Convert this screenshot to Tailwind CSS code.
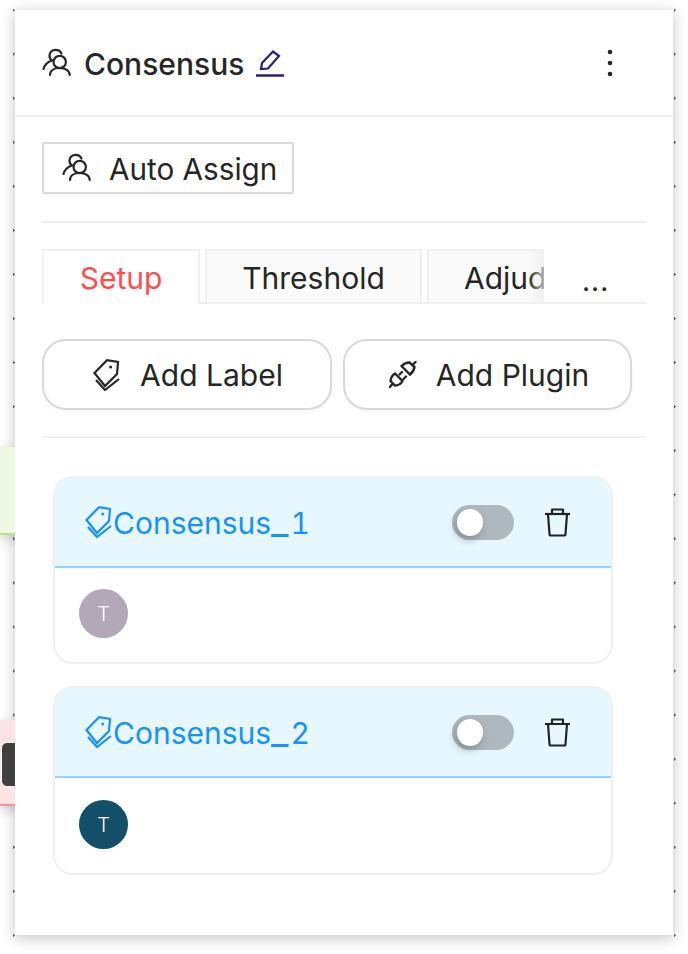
<!DOCTYPE html>
<html lang="en">
<head>
  <meta charset="UTF-8" />
  <title>Consensus</title>
  <script src="https://cdn.jsdelivr.net/npm/@tailwindcss/browser@4"></script>
</head>
<body class="relative w-[688px] h-[954px] overflow-hidden bg-white font-['Inter',sans-serif] text-[#262626]">

  <!-- dotted canvas, only the two columns beside the panel show -->
  <div class="absolute left-[12px] top-[9px] w-[3px] h-[928px] bg-[radial-gradient(circle,#666_1px,transparent_1px)] bg-[size:3px_44.07px] bg-[position:0_-21px]"></div>
  <div class="absolute left-[673px] top-[9px] w-[3px] h-[928px] bg-[radial-gradient(circle,#666_1px,transparent_1px)] bg-[size:3px_44.07px] bg-[position:0_-21px]"></div>

  <div class="absolute left-[15px] top-[10px] w-[658px] h-[925px] bg-white shadow-[0_3px_14px_rgba(0,0,0,0.24)]">

    <header class="flex items-center h-[107px] pl-[27px] pr-[60px] border-b-2 border-[#f0f0f0]">
      <svg class="w-[30px] h-[30px] shrink-0" viewBox="0 0 30 30" fill="none" stroke="#262626" stroke-width="2.2" stroke-linecap="round">
        <circle cx="17.7" cy="14" r="6.2" />
        <path d="M8 27c0-4.500 4-7 9.700-7s10 2.500 10 7" />
        <path d="M19.500 5.500C18.500 3 16 1.800 13.500 1.800c-3.500 0-6 2.700-6 6 0 2 1 3.700 2.500 4.700C5.500 14 2.500 17 1.500 21" />
      </svg>
      <span class="ml-[12px] pt-[2px] text-[30px] font-medium leading-none">Consensus</span>
      <svg class="ml-[12px] w-[28px] h-[28px] shrink-0" viewBox="0 0 28 28" fill="none" stroke="#2a1f7a" stroke-width="2.200">
        <path d="M5 20l1-6L17 2.500l6 4.500L12 19.500z" />
        <path d="M0 26.500h28" stroke-width="2.500" />
      </svg>
      <svg class="ml-auto w-[6px] h-[28px] shrink-0" viewBox="0 0 6 28" fill="#262626">
        <circle cx="3" cy="3" r="2.300" /><circle cx="3" cy="14" r="2.300" /><circle cx="3" cy="25" r="2.300" />
      </svg>
    </header>

    <div class="px-[27px] pt-[25px]">
      <button class="flex items-center w-[252px] h-[52px] pl-[18px] border-2 border-[#d9d9d9] rounded-[2px] shadow-[0_2px_0_rgba(0,0,0,0.02)]">
        <svg class="w-[30px] h-[30px] shrink-0" viewBox="0 0 30 30" fill="none" stroke="#262626" stroke-width="2.200" stroke-linecap="round">
          <circle cx="17.700" cy="14" r="6.200" />
          <path d="M8 27c0-4.500 4-7 9.700-7s10 2.500 10 7" />
          <path d="M19.500 5.500C18.500 3 16 1.800 13.500 1.800c-3.500 0-6 2.700-6 6 0 2 1 3.700 2.500 4.700C5.500 14 2.500 17 1.500 21" />
        </svg>
        <span class="ml-[17px] pt-[4px] text-[29.7px] leading-none">Auto Assign</span>
      </button>

      <div class="mt-[27px] h-[2px] bg-[#f0f0f0]"></div>

      <!-- tabs -->
      <div class="relative flex mt-[26px] h-[55px] border-b-2 border-[#f0f0f0]">
        <div class="relative z-10 flex items-center justify-center w-[158px] h-[55px] pt-[2px] border-2 border-b-0 border-[#f0f0f0] bg-white text-[30px] text-[#ff4d4f]">Setup</div>
        <div class="ml-[5px] flex items-center justify-center w-[217px] h-[53px] pt-[3px] border-2 border-b-0 border-[#f0f0f0] bg-[#fafafa] text-[30px]">Threshold</div>
        <div class="ml-[5px] relative flex items-center w-[117px] h-[53px] pt-[3px] pl-[35px] border-2 border-r-0 border-b-0 border-[#f0f0f0] bg-[#fafafa] text-[30px] overflow-hidden whitespace-nowrap">
          Adjud
          <span class="absolute right-0 top-0 bottom-0 w-[16px] bg-gradient-to-l from-[#ececec]/70 to-transparent"></span>
        </div>
        <span class="ml-[38px] mt-[18px] text-[28px] leading-none tracking-[1px]">...</span>
      </div>

      <div class="flex gap-[11px] mt-[35px]">
        <button class="flex items-center justify-center gap-[19px] w-[290px] h-[71px] pl-[2px] border-2 border-[#d9d9d9] rounded-[24px] shadow-[0_2px_4px_rgba(0,0,0,0.03)] text-[30px]">
          <svg class="w-[28px] h-[32px] shrink-0" viewBox="0 0 28 32" fill="none" stroke="#262626" stroke-width="2.200">
            <path d="M1.500 14L14 1.200l11 1.800-1 12L12 27z" />
            <circle cx="17.600" cy="8" r="1.500" fill="#262626" stroke="none" />
            <path d="M3 21l9 10 14-11" />
          </svg>
          <span class="pt-[2px]">Add Label</span>
        </button>
        <button class="flex items-center justify-center gap-[19px] w-[289px] h-[71px] pl-[3px] border-2 border-[#d9d9d9] rounded-[24px] shadow-[0_2px_4px_rgba(0,0,0,0.03)] text-[30px]">
          <svg class="w-[28px] h-[28px] shrink-0" viewBox="0 0 28 28" fill="none" stroke="#262626" stroke-width="2.400" stroke-linecap="round">
            <path d="M12.500 5l8.500 8.500q4-3.500 4.500-7.500l-5-4.500q-4.500 0-8 3.500z" />
            <path d="M24 3.500l2.500-2.500" />
            <path d="M13.500 20L6 12.500q-4 2.500-4.500 7.500L6 24.500q5 0 7.500-4.500z" />
            <path d="M3 23.500L.8 26M10.500 13.500L13 11M14.500 18l2.500-2.500" />
          </svg>
          <span class="pt-[2px]">Add Plugin</span>
        </button>
      </div>

      <div class="mt-[26px] h-[2px] bg-[#f0f0f0]"></div>

      <!-- label cards -->
      <div class="ml-[11px] mt-[38px] w-[560px] flex flex-col gap-[22px]">
        <section class="h-[188px] border-2 border-[#f0f0f0] rounded-[20px] overflow-hidden">
          <div class="flex items-center h-[90px] pl-[30px] pr-[40px] bg-[#e6f7ff] border-b-2 border-[#91d5ff] text-[#1890ff]">
            <svg class="w-[28px] h-[32px] shrink-0" viewBox="0 0 28 32" fill="none" stroke="#1890ff" stroke-width="2.200">
              <path d="M1.500 14L14 1.200l11 1.800-1 12L12 27z" />
              <circle cx="17.600" cy="8" r="1.500" fill="#1890ff" stroke="none" />
              <path d="M3 21l9 10 14-11" />
            </svg>
            <span class="pb-[4px] text-[30px] leading-none">Consensus<span class="text-[38px] leading-none tracking-[2px]">_</span><span class="tabular-nums">1</span></span>
            <span class="relative ml-auto w-[62px] h-[35px] rounded-full bg-[#aeb9bf]">
              <span class="absolute left-[5px] top-[4px] w-[26px] h-[27px] rounded-full bg-white shadow-[-2px_4px_8px_rgba(0,0,0,0.25)]"></span>
            </span>
            <svg class="ml-[30px] w-[27px] h-[30px] shrink-0" viewBox="0 0 27 30" fill="none" stroke="#1f2329" stroke-width="2.200" stroke-linejoin="round">
              <path d="M1 7h25" />
              <path d="M8 7V2.500h11V7" />
              <path d="M4 7l1.500 20c0 1 .5 1.500 1.500 1.500h13c1 0 1.500-.5 1.500-1.500L23 7" />
            </svg>
          </div>
          <div class="pl-[24px] pt-[21px]">
            <span class="flex items-center justify-center w-[49px] h-[49px] rounded-full bg-[#b3a8b8] text-white text-[20px] font-light">T</span>
          </div>
        </section>

        <section class="h-[189px] border-2 border-[#f0f0f0] rounded-[20px] overflow-hidden">
          <div class="flex items-center h-[90px] pl-[30px] pr-[40px] bg-[#e6f7ff] border-b-2 border-[#91d5ff] text-[#1890ff]">
            <svg class="w-[28px] h-[32px] shrink-0" viewBox="0 0 28 32" fill="none" stroke="#1890ff" stroke-width="2.200">
              <path d="M1.500 14L14 1.200l11 1.800-1 12L12 27z" />
              <circle cx="17.600" cy="8" r="1.500" fill="#1890ff" stroke="none" />
              <path d="M3 21l9 10 14-11" />
            </svg>
            <span class="pb-[4px] text-[30px] leading-none">Consensus<span class="text-[38px] leading-none tracking-[2px]">_</span><span class="tabular-nums">2</span></span>
            <span class="relative ml-auto w-[62px] h-[35px] rounded-full bg-[#aeb9bf]">
              <span class="absolute left-[5px] top-[4px] w-[26px] h-[27px] rounded-full bg-white shadow-[-2px_4px_8px_rgba(0,0,0,0.25)]"></span>
            </span>
            <svg class="ml-[30px] w-[27px] h-[30px] shrink-0" viewBox="0 0 27 30" fill="none" stroke="#1f2329" stroke-width="2.200" stroke-linejoin="round">
              <path d="M1 7h25" />
              <path d="M8 7V2.500h11V7" />
              <path d="M4 7l1.500 20c0 1 .5 1.500 1.500 1.500h13c1 0 1.500-.5 1.500-1.500L23 7" />
            </svg>
          </div>
          <div class="pl-[24px] pt-[22px]">
            <span class="flex items-center justify-center w-[49px] h-[49px] rounded-full bg-[#134f69] text-white text-[20px] font-light">T</span>
          </div>
        </section>
      </div>
    </div>
  </div>

  <!-- canvas nodes peeking out from under the panel, clipped at its edge -->
  <div class="absolute left-0 top-0 w-[15px] h-full overflow-hidden">
    <div class="absolute left-0 top-[447px] w-[30px] h-[88px] bg-[#eef9e4] border-b-2 border-[#b7e28f] shadow-[0_4px_12px_rgba(0,0,0,0.18)]"></div>
    <div class="absolute left-0 top-[720px] w-[30px] h-[86px] bg-[#fde3e3] border-b-2 border-[#ec9c9c] shadow-[0_4px_12px_rgba(0,0,0,0.18)]"></div>
    <div class="absolute left-[1px] top-[742px] w-[30px] h-[45px] rounded-md bg-[#3f3f3f] border border-white"></div>
  </div>
</body>
</html>
